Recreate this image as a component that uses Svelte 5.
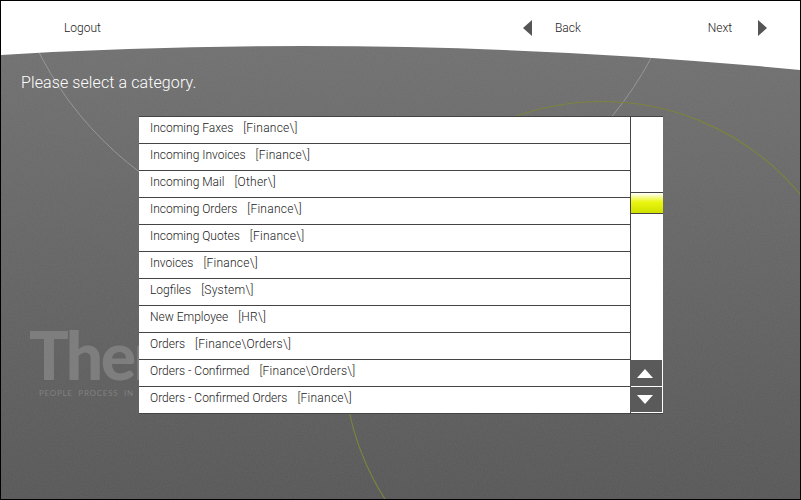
<script>
  const categories = [
    { name: "Incoming Faxes", path: "[Finance\\]" },
    { name: "Incoming Invoices", path: "[Finance\\]" },
    { name: "Incoming Mail", path: "[Other\\]" },
    { name: "Incoming Orders", path: "[Finance\\]" },
    { name: "Incoming Quotes", path: "[Finance\\]" },
    { name: "Invoices", path: "[Finance\\]" },
    { name: "Logfiles", path: "[System\\]" },
    { name: "New Employee", path: "[HR\\]" },
    { name: "Orders", path: "[Finance\\Orders\\]" },
    { name: "Orders - Confirmed", path: "[Finance\\Orders\\]" },
    { name: "Orders - Confirmed Orders", path: "[Finance\\]" },
  ];
</script>

<div class="frame">
  <svg class="backdrop" width="799" height="498" viewBox="1 1 799 498" aria-hidden="true">
    <defs>
      <linearGradient id="bg" x1="0" y1="0" x2="0" y2="1">
        <stop offset="0" stop-color="#727272" />
        <stop offset="1" stop-color="#565656" />
      </linearGradient>
      <filter id="grain" x="0" y="0" width="100%" height="100%">
        <feTurbulence type="fractalNoise" baseFrequency="0.9" numOctaves="2" seed="4" />
        <feColorMatrix values="0 0 0 0 0.5  0 0 0 0 0.5  0 0 0 0 0.5  0 0 0 0.12 0" />
      </filter>
    </defs>
    <rect x="0" y="0" width="801" height="500" fill="url(#bg)" />
    <rect x="0" y="0" width="801" height="500" filter="url(#grain)" />
    <circle cx="346.5" cy="-104" r="345" fill="none" stroke="#979797" stroke-width="1" />
    <circle cx="602" cy="359.5" r="258" fill="none" stroke="#7d833e" stroke-width="1.1" />
    <path d="M0 55 A5200 5200 0 0 1 801 70 L801 0 L0 0 Z" fill="#fff" />
  </svg>

  <div class="logo">
    <div class="logo-name">Ther</div>
    <div class="logo-tag">PEOPLE  PROCESS  IN</div>
  </div>

  <header>
    <button class="nav logout">Logout</button>
    <button class="nav back"><span class="arrow left"></span>Back</button>
    <button class="nav next">Next<span class="arrow right"></span></button>
  </header>

  <h1>Please select a category.</h1>

  <div class="picker">
    <ul>
      {#each categories as c}
        <li>{c.name}<span class="path">{c.path}</span></li>
      {/each}
    </ul>
    <div class="scrollbar">
      <div class="track"><div class="thumb"></div></div>
      <button class="step up" aria-label="Up"><span></span></button>
      <button class="step down" aria-label="Down"><span></span></button>
    </div>
  </div>
</div>

<style>
  :global(body) {
    margin: 0;
    background: #000;
  }

  .frame {
    position: relative;
    width: 801px;
    height: 500px;
    box-sizing: border-box;
    border: 1px solid #000;
    overflow: hidden;
    font-family: "Roboto", "Liberation Sans", sans-serif;
    font-weight: 300;
    color: #222;
  }

  .backdrop {
    position: absolute;
    left: 0;
    top: 0;
  }

  /* sits behind the list, cut off at its left edge */
  .logo {
    position: absolute;
    left: 28px;
    top: 315px;
    width: 110px;
    overflow: hidden;
    white-space: nowrap;
    color: #7e7e7e;
    font-family: "Lato", sans-serif;
  }

  .logo-name {
    font-size: 66px;
    font-weight: 900;
    line-height: 78px;
    letter-spacing: -2.5px;
  }

  .logo-tag {
    margin: -6px 0 0 10px;
    font-size: 8px;
    font-weight: 400;
    letter-spacing: 0.75px;
    white-space: pre;
    color: #808080;
  }

  header {
    position: relative;
    display: flex;
    align-items: center;
    height: 54px;
  }

  .nav {
    display: flex;
    align-items: center;
    padding: 0;
    border: 0;
    background: none;
    font: inherit;
    font-size: 12px;
    color: #222;
  }

  .logout {
    margin-left: 63px;
  }

  .back {
    margin-left: 422px;
  }

  .next {
    margin-left: 127px;
  }

  .arrow {
    width: 0;
    height: 0;
    border-top: 8px solid transparent;
    border-bottom: 8px solid transparent;
  }

  .arrow.left {
    margin-right: 23px;
    border-right: 9px solid #555;
  }

  .arrow.right {
    margin-left: 26px;
    border-left: 9px solid #555;
  }

  h1 {
    position: relative;
    margin: 18px 0 0 20px;
    height: 43px;
    font-size: 16px;
    font-weight: 300;
    line-height: 20px;
    letter-spacing: 0.1px;
    color: #fff;
  }

  .picker {
    position: relative;
    display: flex;
    width: 524px;
    margin-left: 138px;
    background: #fff;
    border-top: 1px solid #444;
    border-bottom: 1px solid #444;
  }

  ul {
    flex: 1;
    margin: 0;
    padding: 0;
    list-style: none;
    border-right: 1px solid #444;
  }

  li {
    height: 26px;
    padding-left: 11px;
    font-size: 12px;
    line-height: 22px;
    white-space: nowrap;
    border-top: 1px solid #444;
  }

  li:first-child {
    border-top: 0;
  }

  .path {
    margin-left: 10px;
    letter-spacing: 0.25px;
  }

  .scrollbar {
    display: flex;
    flex-direction: column;
    width: 32px;
    padding-bottom: 1px;
  }

  .track {
    flex: 1;
  }

  .thumb {
    box-sizing: border-box;
    height: 22px;
    margin-top: 75px;
    border-top: 1px solid #444;
    border-bottom: 1px solid #444;
    background: linear-gradient(#fff, #eaf60f 45%, #cfe000);
  }

  .step {
    display: flex;
    align-items: center;
    justify-content: center;
    height: 26px;
    width: 32px;
    margin-left: -1px;
    padding: 0 2px 0 0;
    border: 0;
    background: #5a5a5a;
  }

  .step.up {
    margin-bottom: 1px;
  }

  .step.down {
    height: 25px;
  }

  .step span {
    width: 0;
    height: 0;
    border-left: 8px solid transparent;
    border-right: 8px solid transparent;
  }

  .up span {
    border-bottom: 9px solid #fff;
  }

  .down span {
    border-top: 9px solid #fff;
  }
</style>
